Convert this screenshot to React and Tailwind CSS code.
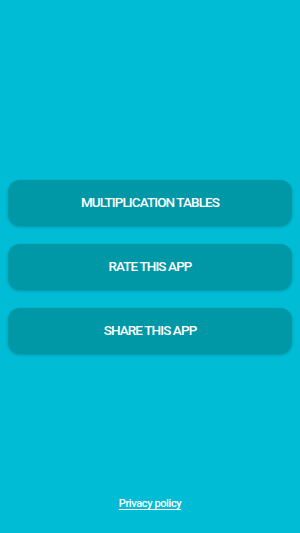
import React from 'react';

const BUTTONS = ['MULTIPLICATION TABLES', 'RATE THIS APP', 'SHARE THIS APP'];

export default function App() {
  return (
    <div
      className="h-[533px] w-full bg-[#00bcd4] flex flex-col"
      style={{ fontFamily: 'Roboto, "Liberation Sans", sans-serif' }}
    >
      <div className="flex-1 basis-0" />

      {/* Main actions */}
      <div className="flex flex-col gap-[18px] px-[8px]">
        {BUTTONS.map(label => (
          <button
            key={label}
            className="h-[46px] w-full rounded-[12px] bg-[#0097a7] text-white text-[13.5px] font-medium tracking-[-0.9px] shadow-[0_1px_3px_rgba(0,0,0,0.2)]"
          >
            {label}
          </button>
        ))}
      </div>

      {/* Footer */}
      <div className="flex-1 basis-0 flex flex-col justify-end items-center">
        <div className="pb-[19px]">
          <a className="text-white text-[11px] font-medium tracking-[-0.4px] underline underline-offset-2">Privacy policy</a>
        </div>
      </div>
    </div>
  );
}
